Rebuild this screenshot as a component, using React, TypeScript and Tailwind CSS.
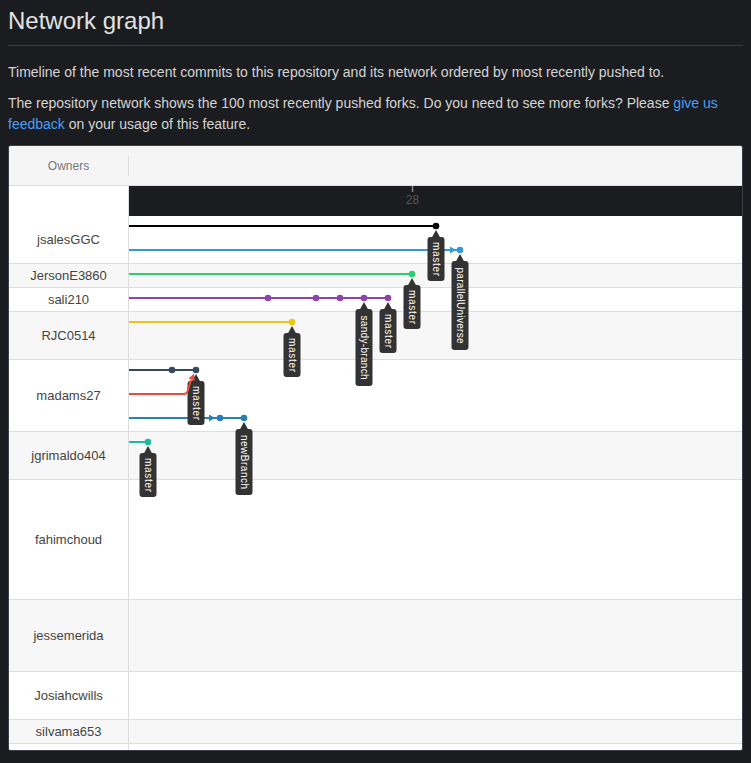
const owners = [
  { name: 'jsalesGGC', h: 'h-[48px]' },
  { name: 'JersonE3860', h: 'h-[24px]' },
  { name: 'sali210', h: 'h-[24px]' },
  { name: 'RJC0514', h: 'h-[48px]' },
  { name: 'madams27', h: 'h-[72px]' },
  { name: 'jgrimaldo404', h: 'h-[48px]' },
  { name: 'fahimchoud', h: 'h-[120px]' },
  { name: 'jessemerida', h: 'h-[72px]' },
  { name: 'Josiahcwills', h: 'h-[48px]' },
  { name: 'silvama653', h: 'h-[24px]' },
  { name: '', h: 'h-[48px]' },
];

type Line = { color: string; y: number; to: number; dots: number[] };

// graph coords: x from left edge of canvas, y from top of the dark timeline band
const lines: Line[] = [
  { color: '#000000', y: 40, to: 307, dots: [307] },
  { color: '#3498db', y: 64, to: 331, dots: [331] },
  { color: '#2ecc71', y: 88, to: 283, dots: [283] },
  { color: '#8e44ad', y: 112, to: 259, dots: [139, 187, 211, 235, 259] },
  { color: '#f1c40f', y: 136, to: 163, dots: [163] },
  { color: '#34495e', y: 184, to: 67, dots: [43, 67] },
  { color: '#2980b9', y: 232, to: 115, dots: [91, 115] },
  { color: '#1abc9c', y: 256, to: 19, dots: [19] },
];

type Tag = { x: number; y: number; text: string; h: number; len: number };

const tags: Tag[] = [
  { x: 307, y: 40, text: 'master', h: 44, len: 34 },
  { x: 331, y: 64, text: 'parallelUniverse', h: 89, len: 76 },
  { x: 283, y: 88, text: 'master', h: 44, len: 34 },
  { x: 235, y: 112, text: 'sandy-branch', h: 77, len: 64 },
  { x: 259, y: 112, text: 'master', h: 44, len: 34 },
  { x: 163, y: 136, text: 'master', h: 44, len: 34 },
  { x: 67, y: 184, text: 'master', h: 44, len: 34 },
  { x: 115, y: 232, text: 'newBranch', h: 66, len: 54 },
  { x: 19, y: 256, text: 'master', h: 44, len: 34 },
];

function BranchTag({ x, y, text, h, len }: Tag) {
  const top = y + 11;
  return (
    <g>
      <path d={`M${x} ${y + 4} L${x + 5} ${top + 2} L${x - 5} ${top + 2} Z`} fill="#333" />
      <rect x={x - 8.5} y={top} width={17} height={h} rx={3} fill="#333" />
      <text
        transform={`translate(${x - 3},${top + h / 2}) rotate(90)`}
        textAnchor="middle"
        fontSize={10}
        fill="#fff"
        textLength={len}
        lengthAdjust="spacing"
        fontFamily="'Liberation Sans', Arial, sans-serif"
      >
        {text}
      </text>
    </g>
  );
}

function Graph() {
  return (
    <svg className="absolute left-[120px] top-0 pointer-events-none" width={613} height={564}>
      {/* timeline tick */}
      <line x1={283.5} y1={0} x2={283.5} y2={6} stroke="#8a8a8a" strokeWidth={1.5} />
      <text x={283.5} y={18} textAnchor="middle" fontSize={12} fill="#555" fontFamily="'Liberation Sans', Arial, sans-serif">
        28
      </text>

      {lines.map((l, i) => (
        <line key={i} x1={0} y1={l.y} x2={l.to} y2={l.y} stroke={l.color} strokeWidth={2} />
      ))}

      {/* arrows */}
      <polygon points="327,64 321,60.5 321,67.5" fill="#3498db" />
      <polygon points="86,232 80,228.5 80,235.5" fill="#2980b9" />

      {lines.map((l, i) =>
        l.dots.map((d) => <circle key={`${i}-${d}`} cx={d} cy={l.y} r={3.3} fill={l.color} />)
      )}

      {tags.map((t, i) => (
        <BranchTag key={i} {...t} />
      ))}

      {/* merge from red into master */}
      <path d="M0 208 H55 Q58.5 208 59.5 202 L62 194" fill="none" stroke="#e74c3c" strokeWidth={2} />
      <polygon points="65,187.5 65.8,195 59.6,192.4" fill="#e74c3c" />
    </svg>
  );
}

export default function App() {
  return (
    <div className="h-[763px] bg-[#1b1c1f] px-2 font-['Liberation_Sans',Arial,sans-serif] overflow-hidden">
      <h1 className="mt-[6px] pb-[9px] text-[24px] leading-[30px] font-normal text-[#e2e2e2] border-b border-[#3a3c41]">
        Network graph
      </h1>
      <p className="mt-[16px] text-[14px] leading-[21px] text-[#d4d4d4]">
        Timeline of the most recent commits to this repository and its network ordered by most recently pushed to.
      </p>
      <p className="mt-[10px] text-[14px] leading-[21px] text-[#d4d4d4]">
        The repository network shows the 100 most recently pushed forks. Do you need to see more forks? Please{' '}
        <a className="text-[#4a9ff5]">give us feedback</a> on your usage of this feature.
      </p>

      <div className="mt-[10px] h-[606px] overflow-hidden rounded-[3px] border border-[#3b3f45] bg-white">
        <div className="flex h-[40px] items-center border-b border-[#dddddd] bg-[#f5f5f5]">
          <div className="w-[119px] text-center text-[12px] text-[#777]">Owners</div>
          <div className="h-[20px] w-px bg-[#dddddd]" />
        </div>

        <div className="relative">
          <div className="flex h-[30px]">
            <div className="w-[120px] border-r border-[#dddddd] bg-white" />
            <div className="flex-1 bg-[#1b1c1f]" />
          </div>
          {owners.map((o, i) => (
            <div
              key={i}
              className={`flex ${o.h} border-b border-[#dddddd] ${i % 2 === 1 ? 'bg-[#f7f7f7]' : 'bg-white'}`}
            >
              <div className="flex w-[120px] items-center justify-center border-r border-[#dddddd] text-[13px] text-[#444]">
                {o.name}
              </div>
              <div className="flex-1" />
            </div>
          ))}
          <Graph />
        </div>
      </div>
    </div>
  );
}
